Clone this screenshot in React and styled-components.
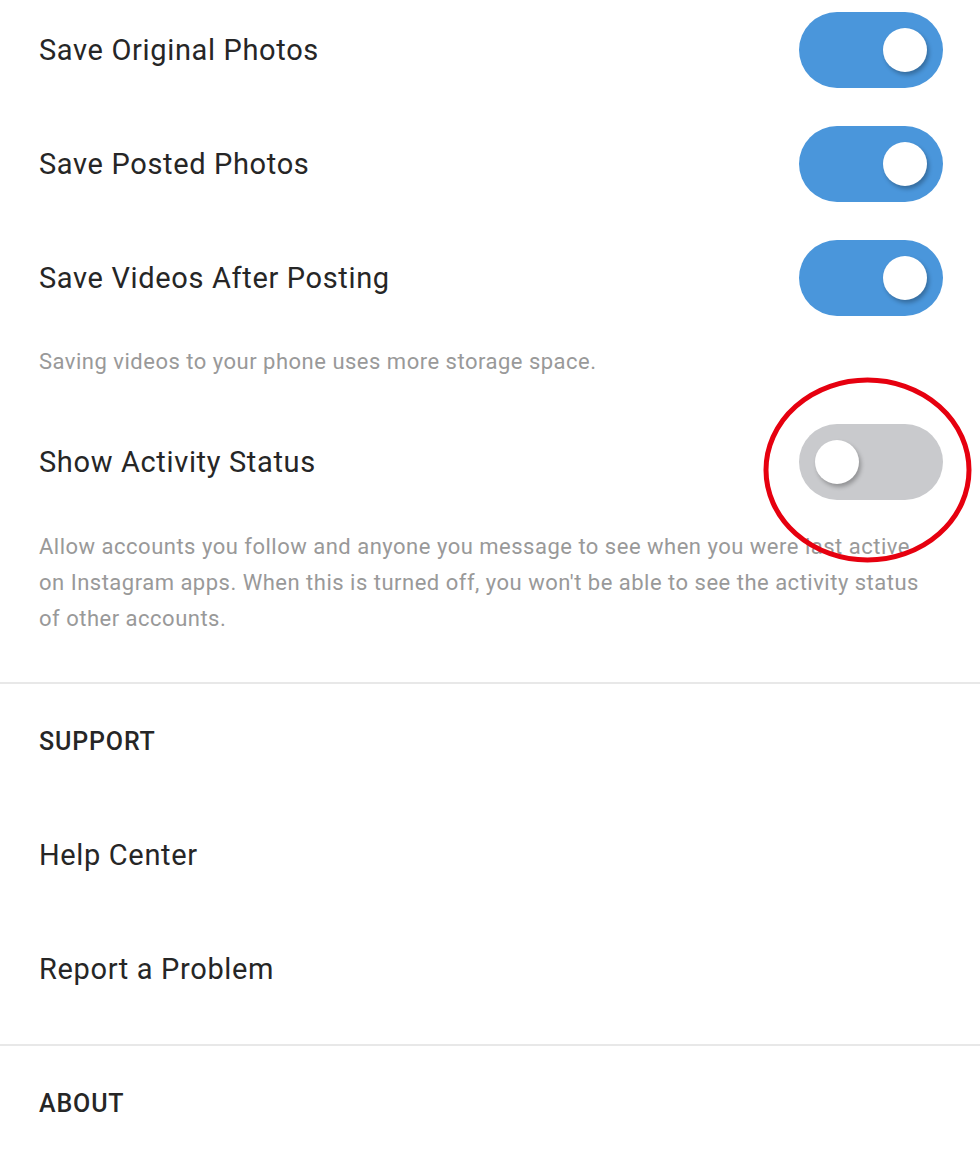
import React from 'react';
import styled, { createGlobalStyle } from 'styled-components';

const GlobalStyle = createGlobalStyle`
    html, body {
        margin: 0;
        padding: 0;
        background: #ffffff;
        overflow: hidden;
    }
    body {
        font-family: Roboto, "Liberation Sans", Arial, sans-serif;
        -webkit-font-smoothing: antialiased;
    }
`;

function Toggle({ on }) {
    return (
        <Track on={on ? 1 : 0}>
            <Knob />
        </Track>
    );
}

function SettingsPage() {
    return (
        <Page>
            <Group>
                <Row>
                    <Label>Save Original Photos</Label>
                    <Toggle on />
                </Row>
                <Row>
                    <Label>Save Posted Photos</Label>
                    <Toggle on />
                </Row>
                <Row>
                    <Label>Save Videos After Posting</Label>
                    <Toggle on />
                </Row>
                <Caption gap="9px 0 25px">Saving videos to your phone uses more storage space.</Caption>
                <Row>
                    <Label>Show Activity Status</Label>
                    <Marked>
                        <Toggle />
                        <Circle viewBox="0 0 209 186" width="209" height="186">
                            <ellipse cx="104.5" cy="93" rx="101.5" ry="90" fill="none" stroke="#e6000f" strokeWidth="5" />
                        </Circle>
                    </Marked>
                </Row>
                <Caption gap="10px 18px 45px 0">
                    Allow accounts you follow and anyone you message to see when you were last active
                    on Instagram apps. When this is turned off, you won't be able to see the activity status
                    of other accounts.
                </Caption>
            </Group>
            <Divider />
            <Group>
                <Header>SUPPORT</Header>
                <Row>
                    <Label>Help Center</Label>
                </Row>
                <Row>
                    <Label>Report a Problem</Label>
                </Row>
            </Group>
            <Divider gap="18px" />
            <Group>
                <Header>ABOUT</Header>
            </Group>
        </Page>
    );
}

export default function App() {
    return (
        <>
            <GlobalStyle />
            <SettingsPage />
        </>
    );
}

const Page = styled.main`
    width: 980px;
    height: 1174px;
    margin-top: -7px;
    background: #ffffff;
    color: #262626;
`;

const Group = styled.section`
    padding: 0 37px 0 39px;
    display: flex;
    flex-direction: column;
`;

const Row = styled.div`
    height: 114px;
    display: flex;
    align-items: center;
    justify-content: space-between;
`;

const Label = styled.span`
    font-size: 29px;
    letter-spacing: 0.65px;
    color: #262626;
`;

const Header = styled.div`
    height: 114px;
    display: flex;
    align-items: center;
    font-size: 25px;
    font-weight: 500;
    letter-spacing: 0.85px;
    color: #262626;
`;

const Caption = styled.p`
    margin: 0;
    padding: ${p => p.gap || '0'};
    font-size: 22px;
    letter-spacing: 0.5px;
    line-height: 36px;
    color: #999999;
`;

const Divider = styled.hr`
    margin: ${p => p.gap || '0'} 0 0;
    border: none;
    height: 2px;
    background: #e8e8e8;
`;

const Track = styled.div`
    width: 144px;
    height: 76px;
    border-radius: 38px;
    background: ${p => (p.on ? '#4a96db' : '#c9cacd')};
    display: flex;
    align-items: center;
    justify-content: ${p => (p.on ? 'flex-end' : 'flex-start')};
    padding: 0 16px;
    box-sizing: border-box;
`;

const Knob = styled.div`
    width: 44px;
    height: 44px;
    border-radius: 50%;
    background: #ffffff;
    box-shadow: 2px 3px 4px rgba(0, 0, 0, 0.28);
`;

const Marked = styled.div`
    position: relative;
`;

const Circle = styled.svg`
    position: absolute;
    left: -36px;
    top: -47px;
    pointer-events: none;
`;
